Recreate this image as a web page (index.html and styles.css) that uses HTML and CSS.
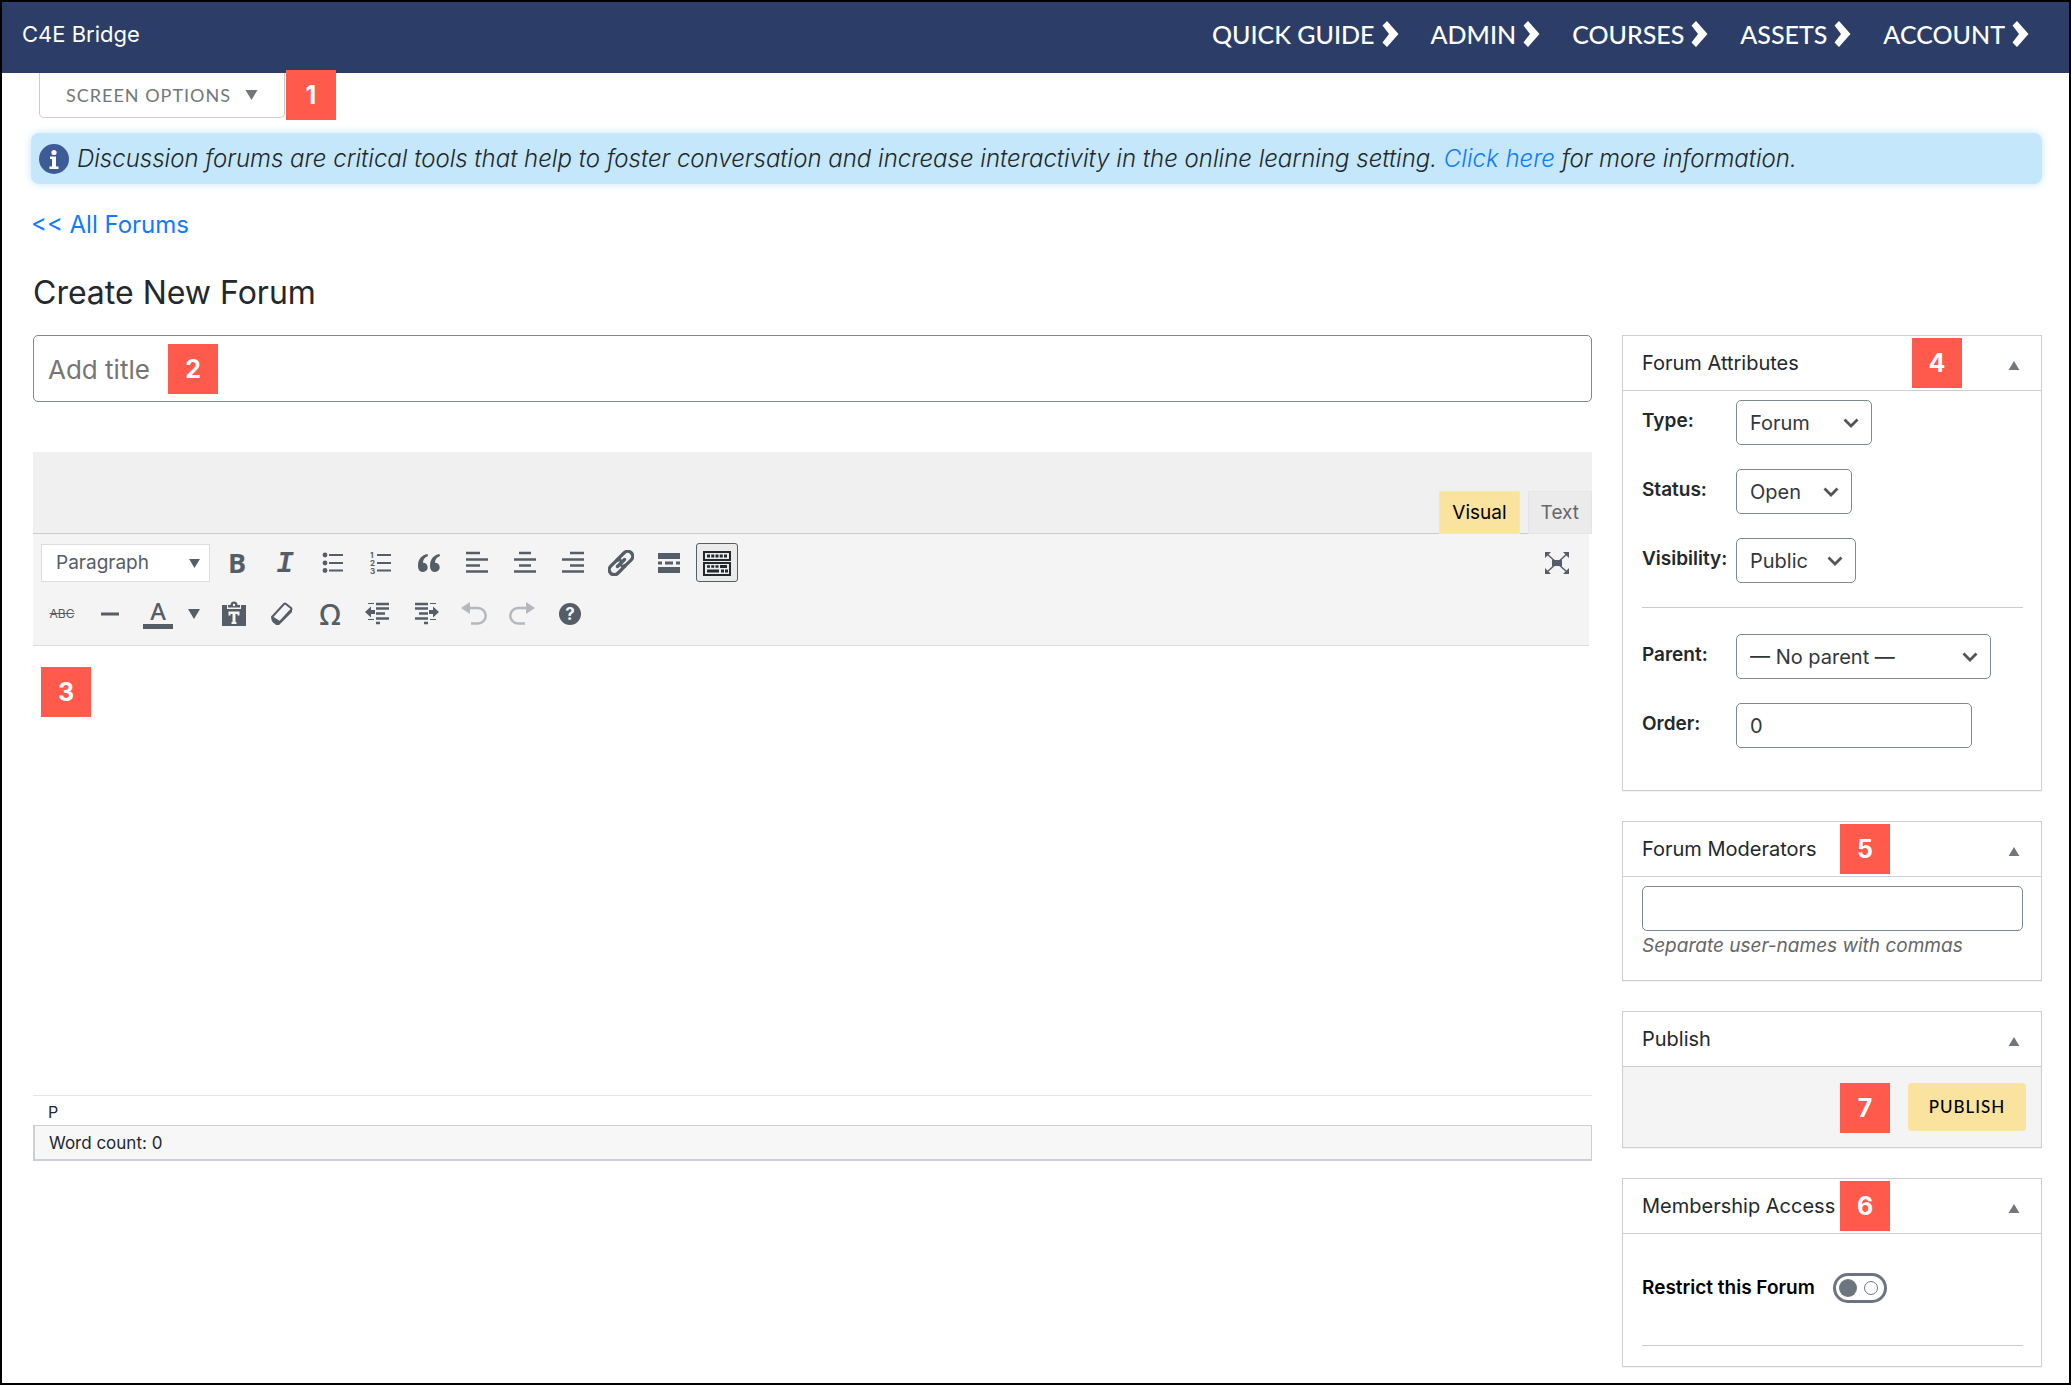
FILE: index.html
```html
<!DOCTYPE html>
<html lang="en">
<head>
<meta charset="utf-8">
<title>Create New Forum - C4E Bridge</title>
<link rel="stylesheet" href="styles.css">
</head>
<body>
<svg class="sprite" aria-hidden="true">
  <symbol id="chevron" viewBox="0 0 16 26"><path d="M0 4.500 4.500 0 16 13 4.500 26 0 21.500 6.500 13z" fill="currentColor"/></symbol>
  <symbol id="down" viewBox="0 0 16 10"><path d="M1.500 1.500 8 8 14.500 1.500" fill="none" stroke="currentColor" stroke-width="2.800"/></symbol>
  <symbol id="caret" viewBox="0 0 12 10"><path d="M0 0h12L6 10z" fill="currentColor"/></symbol>
  <symbol id="up" viewBox="0 0 12 10"><path d="M0 10h12L6 0z" fill="currentColor"/></symbol>
</svg>
<header class="topbar">
  <a class="brand" href="#">C4E Bridge</a>
  <nav class="menu">
    <a href="#">QUICK GUIDE<svg><use href="#chevron"/></svg></a>
    <a href="#">ADMIN<svg><use href="#chevron"/></svg></a>
    <a href="#">COURSES<svg><use href="#chevron"/></svg></a>
    <a href="#">ASSETS<svg><use href="#chevron"/></svg></a>
    <a href="#">ACCOUNT<svg><use href="#chevron"/></svg></a>
  </nav>
</header>
<main class="page">
  <div class="options">
    <button class="options-btn" type="button">SCREEN OPTIONS <svg><use href="#caret"/></svg></button>
    <span class="badge badge-options">1</span>
  </div>
  <p class="notice">
    <svg class="info" viewBox="0 0 30 30"><circle cx="15" cy="15" r="15" fill="#3f5b96"/><circle cx="15" cy="8.500" r="2.600" fill="#fff"/><path d="M11 12.500h6v10h2.500V25h-9v-2.500H13V15h-2z" fill="#fff"/></svg>
    <span>Discussion forums are critical tools that help to foster conversation and increase interactivity in the online learning setting. <a href="#">Click here</a> for more information.</span>
  </p>
  <a class="back" href="#">&lt;&lt; All Forums</a>
  <h1>Create New Forum</h1>
  <form class="columns">
    <div class="content">
      <div class="title-field">
        <input type="text" placeholder="Add title" aria-label="Add title">
        <span class="badge badge-title">2</span>
      </div>
      <section class="editor">
        <div class="tabs">
          <button class="tab active" type="button">Visual</button>
          <button class="tab" type="button">Text</button>
        </div>
        <div class="toolbar">
          <div class="tools">
            <div class="format"><select aria-label="Block format"><option>Paragraph</option></select><svg><use href="#caret"/></svg></div>
            <button class="tool bold" type="button" title="Bold">B</button>
            <button class="tool italic" type="button" title="Italic">I</button>
            <button class="tool" type="button" title="Bulleted list"><svg viewBox="0 0 26 26"><g fill="currentColor"><circle cx="5" cy="5" r="2.400"/><circle cx="5" cy="13" r="2.400"/><circle cx="5" cy="20.500" r="2.400"/><path d="M9 4h14v2H9zM9 12h14v2H9zM9 19.500h14v2H9z"/></g></svg></button>
            <button class="tool" type="button" title="Numbered list"><svg viewBox="0 0 26 26"><path d="M9 4h14v2H9zM9 12h14v2H9zM9 19.500h14v2H9z" fill="currentColor"/><g class="digits"><text x="2" y="8">1</text><text x="2" y="16">2</text><text x="2" y="24">3</text></g></svg></button>
            <button class="tool" type="button" title="Blockquote"><svg viewBox="0 0 26 26"><path id="q" d="M11.500 4C5 5 2 10 2 15.500 2 20 4 22 7 22c2.700 0 4.700-2 4.700-4.700 0-2.800-2-4.600-4.700-4.600C7 9.500 8.500 7.500 12 6z" fill="currentColor"/><use href="#q" x="12"/></svg></button>
            <button class="tool" type="button" title="Align left"><svg viewBox="0 0 26 26"><path d="M2 3h14M2 9.500h22M2 15.500h14M2 21.500h22" class="bars"/></svg></button>
            <button class="tool" type="button" title="Align center"><svg viewBox="0 0 26 26"><path d="M7 3h12M2 9.500h22M7 15.500h12M2 21.500h22" class="bars"/></svg></button>
            <button class="tool" type="button" title="Align right"><svg viewBox="0 0 26 26"><path d="M10 3h14M2 9.500h22M10 15.500h14M2 21.500h22" class="bars"/></svg></button>
            <button class="tool" type="button" title="Insert link"><svg viewBox="0 0 26 26"><g fill="none" stroke="currentColor" stroke-width="3.300" stroke-linecap="round" transform="rotate(-45 13 13)"><path d="M14 18H3.500a5 5 0 0 1 0-10H10q3 0 4.500 2M8 13h10"/><path d="M12 8h10.500a5 5 0 0 1 0 10H16q-3 0-4.500-2"/></g></svg></button>
            <button class="tool" type="button" title="Read more"><svg viewBox="0 0 26 26"><path d="M2 3h22v6H2zM2 17h22v6H2zM2 11.500h4v3H2zM9 11.500h8v3H9zM20 11.500h4v3h-4z" fill="currentColor"/></svg></button>
            <button class="tool pressed" type="button" title="Toolbar toggle"><svg viewBox="0 0 28 26"><g fill="none" stroke="currentColor"><path d="M1 2h26v8H1zM1 13h26v12H1z" stroke-width="2"/><path d="M4 6h20" stroke-width="3" stroke-dasharray="3 1.250"/><path d="M4 16.500h12" stroke-width="2.500" stroke-dasharray="3 1.250"/><path d="M17 16.500h7M4 21h12" stroke-width="2.800"/><path d="M18 21h7" stroke-width="2.800" stroke-dasharray="3 1"/></g></svg></button>
            <button class="tool fullscreen" type="button" title="Fullscreen"><svg viewBox="0 0 26 26"><path d="m3 4 20 18M23 4 3 22" stroke="currentColor" stroke-width="1.500"/><path d="M1 2h6L1 8zM25 2h-6l6 6zM1 24h6l-6-6zM25 24h-6l6-6zM8 10h10v6H8z" fill="currentColor"/></svg></button>
          </div>
          <div class="tools">
            <button class="tool strike" type="button" title="Strikethrough">ABC</button>
            <button class="tool" type="button" title="Horizontal line"><svg viewBox="0 0 26 26"><path d="M4 13h18" stroke="currentColor" stroke-width="3"/></svg></button>
            <div class="split">
              <button class="tool color" type="button" title="Text color"><span>A</span></button>
              <button class="tool more" type="button" title="Choose color"><svg><use href="#caret"/></svg></button>
            </div>
            <button class="tool" type="button" title="Paste as text"><svg viewBox="0 0 26 26"><path d="M1 4h5v4h14V4h5v21H1z" fill="currentColor"/><path d="M7 6.500V4h2.500a3.500 3.500 0 0 1 7 0H19v2.500z" fill="currentColor"/><circle cx="13" cy="4" r="1.200" fill="#f4f4f4"/><path d="M7.500 10.500h11v4h-2V13h-2v8h1v2h-5v-2h1v-8h-2v1.500h-2z" fill="#f4f4f4"/></svg></button>
            <button class="tool" type="button" title="Clear formatting"><svg viewBox="0 0 26 26"><path d="M3 16 15 3q1-1 2 0l5 4q1 1 0 2L10 22l-5-1q-2-2-2-5z" fill="none" stroke="currentColor" stroke-width="2"/><path d="m3 15 8 5 1-1 11-12v4L10 24H7l-4-4z" fill="currentColor"/></svg></button>
            <button class="tool omega" type="button" title="Special character">Ω</button>
            <button class="tool" type="button" title="Decrease indent"><svg viewBox="0 0 26 26"><path d="M11 3h13M11 7.500h13M11 12.500h9M11 17.500h13M11 22h4" class="bars"/><path d="M3 2.500h6M3 18.500h6" stroke="currentColor"/><path d="M0 11 6 5.500v3.500h4v4H6v3.500z" fill="currentColor"/></svg></button>
            <button class="tool" type="button" title="Increase indent"><svg viewBox="0 0 26 26"><path d="M2 3h13M2 7.500h13M6 12.500h9M2 17.500h13M11 22h4" class="bars"/><path d="M17 2.500h6M17 18.500h6" stroke="currentColor"/><path d="m26 11-6-5.500v3.500h-4v4h4v3.500z" fill="currentColor"/></svg></button>
            <button class="tool" type="button" title="Undo" disabled><svg viewBox="0 0 26 26"><path d="M9 7h8a7.500 7.500 0 0 1 0 15.500h-7" fill="none" stroke="currentColor" stroke-width="2.500"/><path d="M0 7 9 1v12z" fill="currentColor"/></svg></button>
            <button class="tool" type="button" title="Redo" disabled><svg viewBox="0 0 26 26"><path d="M17 7H9a7.500 7.500 0 0 0 0 15.500h7" fill="none" stroke="currentColor" stroke-width="2.500"/><path d="M26 7 17 1v12z" fill="currentColor"/></svg></button>
            <button class="tool" type="button" title="Help"><svg viewBox="0 0 26 26"><circle cx="13" cy="13" r="11" fill="currentColor"/><text x="13" y="19" class="question">?</text></svg></button>
          </div>
        </div>
        <div class="writing">
          <textarea aria-label="Forum content"></textarea>
          <span class="badge badge-content">3</span>
        </div>
        <div class="path">P</div>
        <div class="count">Word count: 0</div>
      </section>
    </div>
    <aside class="side">
      <section class="box attributes">
        <div class="box-head"><h2>Forum Attributes</h2><button type="button" aria-label="Collapse Forum Attributes"><svg><use href="#up"/></svg></button><span class="badge badge-far">4</span></div>
        <div class="box-body">
          <div class="field"><label for="type">Type:</label><div class="pick w-type"><select id="type"><option>Forum</option></select><svg><use href="#down"/></svg></div></div>
          <div class="field"><label for="status">Status:</label><div class="pick w-status"><select id="status"><option>Open</option></select><svg><use href="#down"/></svg></div></div>
          <div class="field"><label for="visibility">Visibility:</label><div class="pick w-visibility"><select id="visibility"><option>Public</option></select><svg><use href="#down"/></svg></div></div>
          <hr>
          <div class="field"><label for="parent">Parent:</label><div class="pick w-parent"><select id="parent"><option>— No parent —</option></select><svg><use href="#down"/></svg></div></div>
          <div class="field"><label for="order">Order:</label><input class="w-order" id="order" type="text" value="0"></div>
        </div>
      </section>
      <section class="box">
        <div class="box-head"><h2>Forum Moderators</h2><button type="button" aria-label="Collapse Forum Moderators"><svg><use href="#up"/></svg></button><span class="badge badge-near">5</span></div>
        <div class="box-body moderators">
          <input type="text" id="mods" aria-label="Forum Moderators">
          <label for="mods">Separate user-names with commas</label>
        </div>
      </section>
      <section class="box">
        <div class="box-head"><h2>Publish</h2><button type="button" aria-label="Collapse Publish"><svg><use href="#up"/></svg></button></div>
        <div class="box-foot"><span class="badge badge-publish">7</span><button class="publish" type="submit">PUBLISH</button></div>
      </section>
      <section class="box">
        <div class="box-head"><h2>Membership Access</h2><button type="button" aria-label="Collapse Membership Access"><svg><use href="#up"/></svg></button><span class="badge badge-near">6</span></div>
        <div class="box-body">
          <div class="restrict"><label for="restrict">Restrict this Forum</label><input class="switch" type="checkbox" id="restrict"></div>
        </div>
      </section>
    </aside>
  </form>
</main>
</body>
</html>
```
FILE: styles.css
```css
* { box-sizing: border-box; }
body {
  margin: 0;
  min-height: 100vh;
  border: 2px solid #000;
  background: #fff;
  color: #23282d;
  font: 20px/28px Inter, sans-serif;
}
h1, h2, p { margin: 0; font-weight: 400; }
a { color: #0f7bff; text-decoration: none; }
button, input, select, textarea { margin: 0; font: inherit; color: inherit; }
button { padding: 0; border: 0; background: none; cursor: pointer; }
select { appearance: none; }
svg { display: block; flex: none; }
.sprite { position: absolute; width: 0; height: 0; }

.topbar {
  display: flex;
  align-items: center;
  justify-content: space-between;
  height: 71px;
  padding: 0 40px 8px 20px;
  background: #2c3e67;
}
.topbar a { color: #fff; }
.brand { font-size: 22px; }
.menu { display: flex; gap: 32px; font: 500 25px/32px Lato, sans-serif; }
.menu a { display: flex; align-items: center; gap: 7px; }
.menu svg { width: 17px; height: 26px; }

.page { padding: 0 27px 16px 29px; }
.options { position: relative; display: flex; padding-left: 8px; }
.options-btn {
  display: flex;
  align-items: center;
  gap: 14px;
  height: 45px;
  padding: 0 26px;
  border: 1px solid #ccc;
  border-top: 0;
  border-radius: 0 0 5px 5px;
  color: #72777c;
  font: 18px/24px Lato, sans-serif;
  letter-spacing: 1px;
}
.options-btn svg { width: 13px; height: 10px; }
.badge {
  position: absolute;
  width: 50px;
  height: 50px;
  background: #ff5a4c;
  color: #fff;
  font: 700 25px/50px Inter, sans-serif;
  text-align: center;
}
.badge-options { left: 255px; top: -3px; }
.badge-title { left: 135px; top: 9px; }
.badge-content { left: 8px; top: 21px; }
.badge-far { right: 79px; top: 2px; }
.badge-near { right: 151px; top: 2px; }
.badge-publish { right: 151px; top: 16px; }

.notice {
  display: flex;
  align-items: center;
  gap: 8px;
  min-height: 51px;
  margin-top: 15px;
  padding: 1px 8px 0;
  border-radius: 8px;
  background: #c5e7fb;
  box-shadow: 0 0 8px #c5e7fb;
  font-size: 24px;
  font-weight: 300;
  font-style: italic;
}
.info { width: 30px; height: 30px; }
.back { display: block; width: max-content; margin-top: 24px; font-size: 24px; line-height: 34px; }
h1 { margin: 30px 0 21px 2px; font-size: 32px; line-height: 42px; }

.columns { display: grid; grid-template-columns: minmax(0, 1fr) 420px; gap: 30px; padding-left: 2px; align-items: start; }
.title-field { position: relative; margin-bottom: 50px; }
.title-field input {
  display: block;
  width: 100%;
  height: 67px;
  padding: 2px 14px 0;
  border: 1px solid #7e8993;
  border-radius: 5px;
  font-size: 26px;
}
.title-field input::placeholder { color: #757575; opacity: 1; }

.tabs {
  display: flex;
  align-items: flex-end;
  justify-content: flex-end;
  gap: 8px;
  height: 82px;
  border-bottom: 1px solid #ccc;
  background: #f0f0f0;
}
.tab {
  height: 43px;
  margin-bottom: -1px;
  padding: 0 12px;
  border: 1px solid #e5e5e5;
  background: #ebebeb;
  color: #666;
  font-size: 19px;
}
.tab.active { background: #fae29f; color: #000; }
.toolbar {
  display: grid;
  gap: 12px;
  margin-right: 3px;
  padding: 9px 11px 12px 8px;
  border-bottom: 1px solid #ddd;
  background: #f4f4f4;
  color: #555d66;
}
.tools { display: flex; align-items: center; gap: 6px; }
.format { position: relative; }
.format select {
  display: block;
  width: 169px;
  height: 38px;
  padding: 0 14px;
  border: 1px solid #ddd;
  border-radius: 0;
  background: #fff;
  font-size: 19px;
}
.format svg, .pick svg { position: absolute; pointer-events: none; }
.format svg { right: 9px; top: 15px; width: 13px; height: 9px; }
.tool { display: flex; align-items: center; justify-content: center; width: 42px; height: 39px; }
.tool svg { width: 26px; height: 26px; }
.tool:disabled { color: #b4b8bc; }
.tool.bold { font: 700 27px/38px "Open Sans", sans-serif; }
.tool.italic { padding-top: 4px; font: italic 700 29px/34px "Liberation Mono", monospace; }
.tool.strike { font-size: 12px; text-decoration: line-through; }
.tool.omega { font: 500 29px/38px "Noto Sans", sans-serif; }
.tool.fullscreen { margin-left: auto; }
.tool.pressed { border: 1px solid #555d66; border-radius: 3px; background: #ebebeb; color: #23282d; }
.tool.pressed svg { width: 28px; }
.tool.color span { width: 30px; height: 30px; border-bottom: 5px solid; font: 500 24px/24px "Noto Sans", sans-serif; }
.tool.more { width: 26px; }
.tool.more svg { width: 12px; height: 10px; }
.split { display: flex; gap: 2px; }
.bars { stroke: currentColor; stroke-width: 2.5; }
.digits { fill: currentColor; font: 700 8px Inter, sans-serif; }
.question { fill: #f4f4f4; font: 700 17px Inter, sans-serif; text-anchor: middle; }
.writing { position: relative; }
.writing textarea { display: block; width: 100%; height: 449px; padding: 16px; border: 0; outline: 0; resize: none; }
.path { height: 30px; padding-left: 15px; border-top: 1px solid #e5e5e5; font-size: 16px; line-height: 32px; }
.count {
  height: 36px;
  padding-left: 14px;
  border: 1px solid #ccd0d4;
  border-width: 1px 1px 2px 2px;
  background: #f7f7f7;
  font-size: 17px;
  line-height: 34px;
}

.side { display: grid; gap: 30px; }
.box { border: 1px solid #ccd0d4; box-shadow: 0 1px 1px #0000000a; }
.attributes { padding-bottom: 22px; }
.box-head {
  position: relative;
  display: flex;
  align-items: center;
  justify-content: space-between;
  height: 55px;
  padding: 0 21px 0 19px;
  border-bottom: 1px solid #ccd0d4;
}
.box-head h2 { font-size: 20px; line-height: 28px; }
.box-head button { padding-top: 4px; color: #72777c; }
.box-head button svg { width: 12px; height: 9px; }
.box-body { padding: 9px 18px 20px 19px; }
.field { display: grid; grid-template-columns: 94px auto; justify-content: start; align-items: center; margin-bottom: 24px; }
.field:last-child { margin-bottom: 0; }
.field label { padding-bottom: 3px; font-size: 19px; font-weight: 600; }
.field select, .box-body input[type="text"] {
  display: block;
  width: 100%;
  height: 45px;
  padding: 0 13px;
  border: 1px solid #7e8993;
  border-radius: 5px;
  background: #fff;
  color: #32373c;
}
.pick { position: relative; }
.pick svg { right: 13px; top: 18px; width: 16px; height: 10px; color: #555; }
.w-type { width: 136px; }
.w-status { width: 116px; }
.w-visibility { width: 120px; }
.w-parent { width: 255px; }
.box-body input.w-order { width: 236px; }
hr { margin: 0 0 26px; border: 0; border-top: 1px solid #ccc; }
.moderators label { display: block; margin-top: 1px; color: #666; font-size: 19px; font-style: italic; }
.box-foot { position: relative; display: flex; justify-content: flex-end; padding: 16px 15px; background: #f4f4f4; }
.publish {
  width: 118px;
  height: 48px;
  border-radius: 4px;
  background: #fae29f;
  color: #000;
  font: 500 17px/24px Lato, sans-serif;
  letter-spacing: 1px;
}
.restrict {
  display: flex;
  align-items: center;
  gap: 18px;
  height: 103px;
  padding-bottom: 13px;
  border-bottom: 1px solid #ccc;
  color: #000;
  font-size: 19px;
  font-weight: 600;
}
.switch {
  appearance: none;
  display: flex;
  align-items: center;
  justify-content: space-between;
  width: 54px;
  height: 30px;
  padding: 0 6px 0 3px;
  border: 3px solid #6c757d;
  border-radius: 15px;
}
.switch::before { content: ""; width: 18px; height: 18px; border-radius: 50%; background: #6c757d; }
.switch::after { content: ""; width: 12px; height: 12px; border: 1px solid #6c757d; border-radius: 50%; }
```
